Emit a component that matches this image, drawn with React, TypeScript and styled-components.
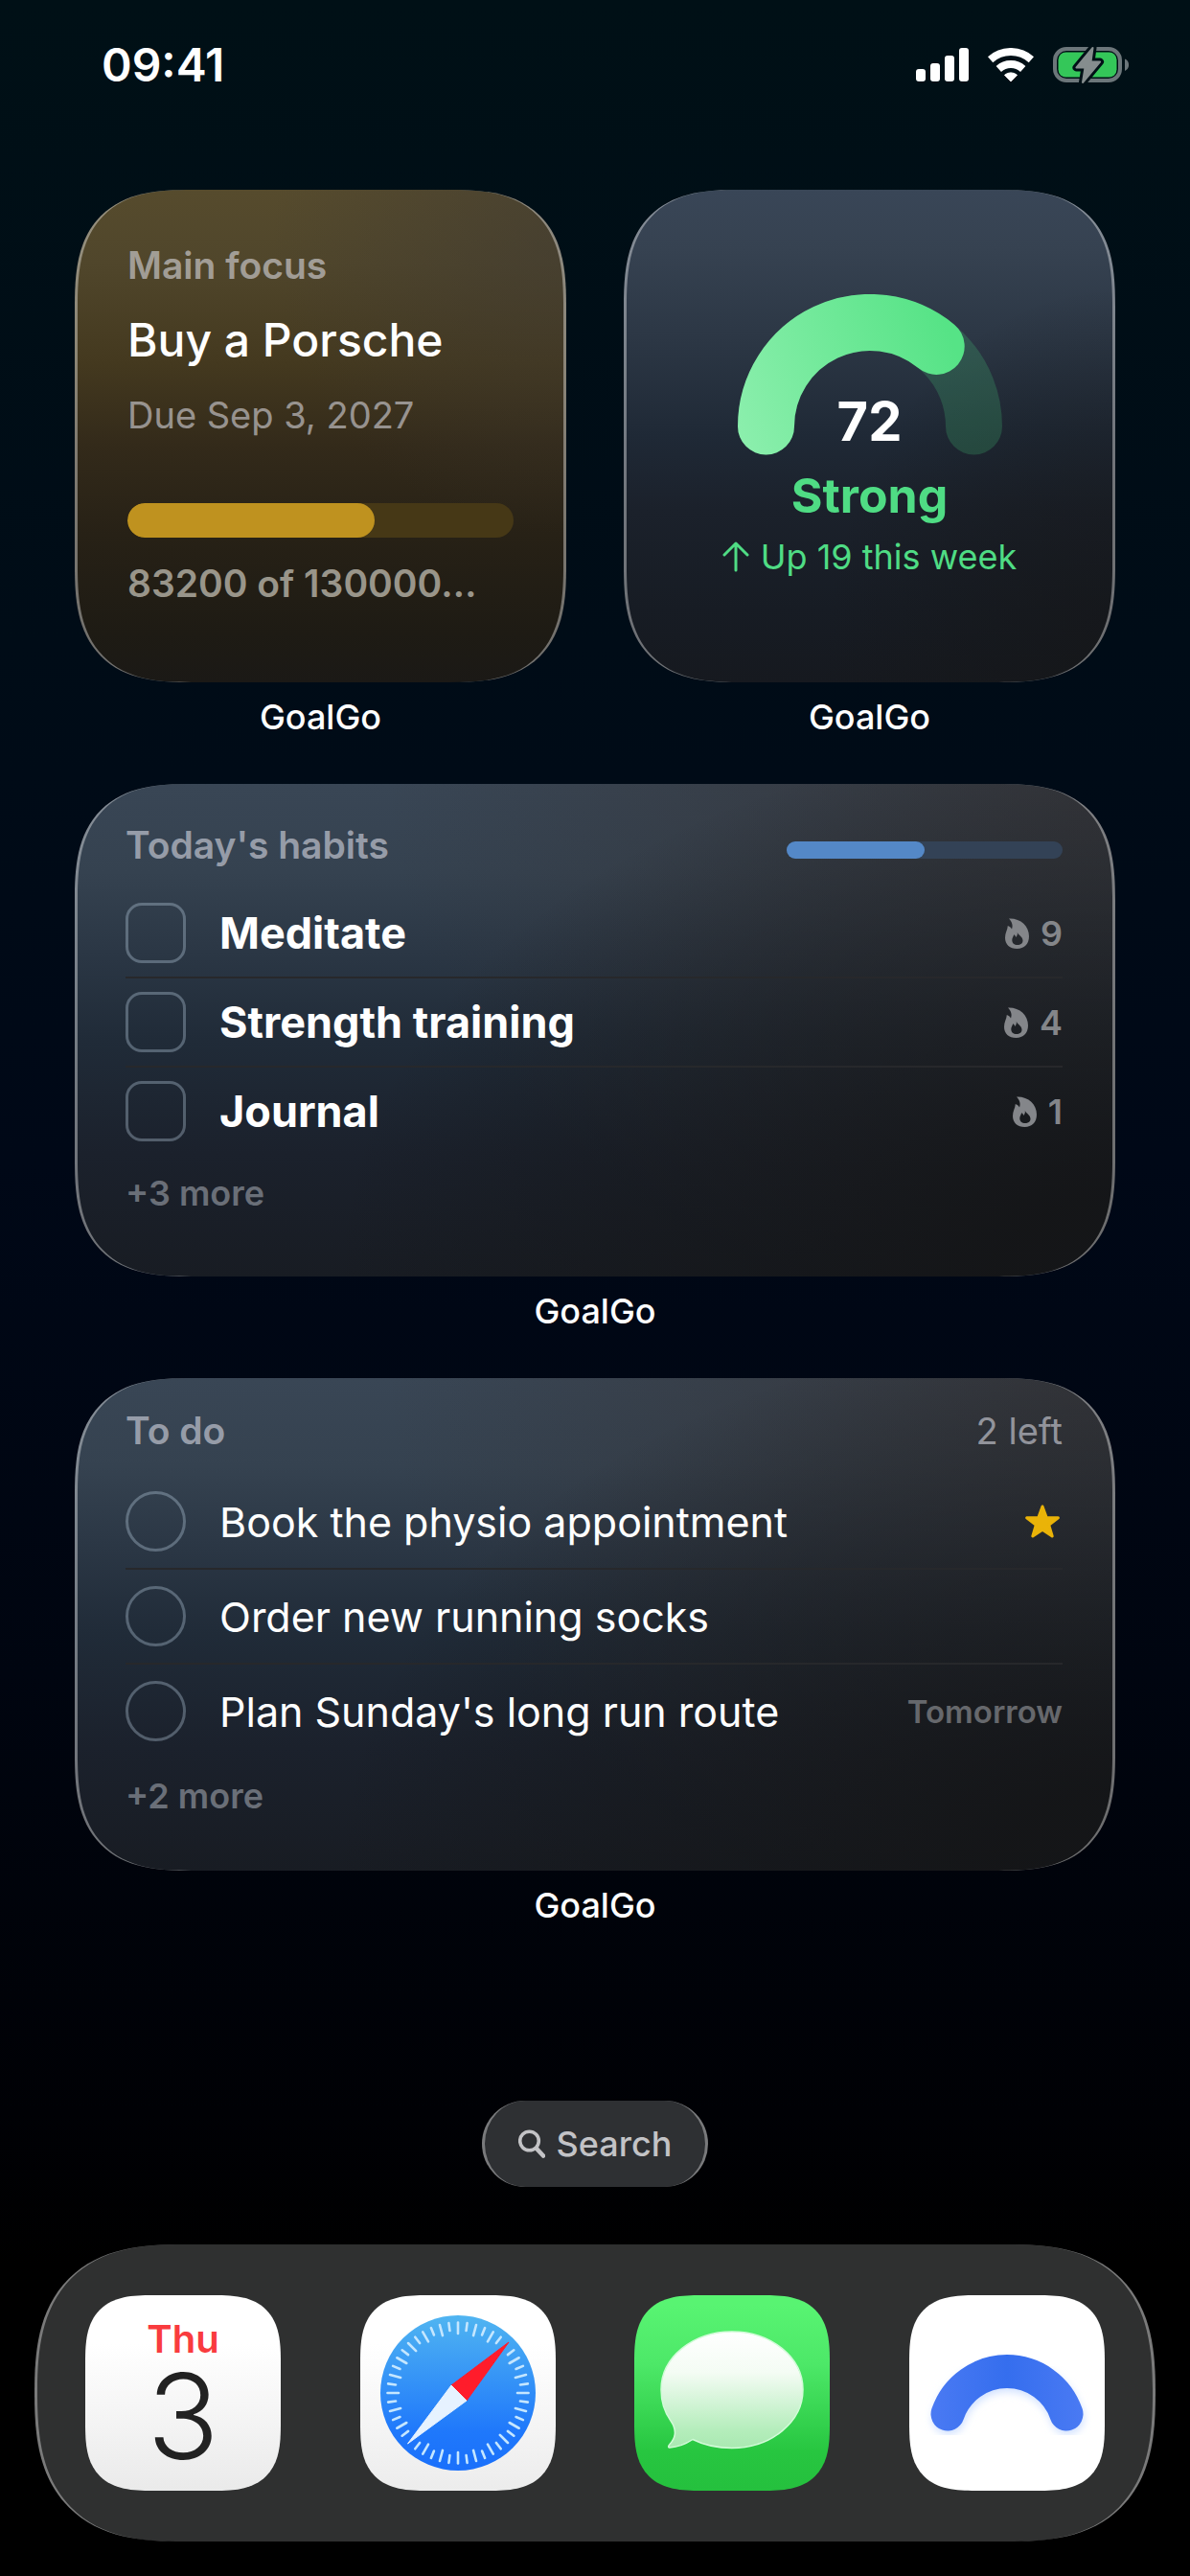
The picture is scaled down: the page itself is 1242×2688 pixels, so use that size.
import React, { useState } from 'react';
import styled, { createGlobalStyle } from 'styled-components';

const habits = [
  { name: 'Meditate', streak: 9 },
  { name: 'Strength training', streak: 4 },
  { name: 'Journal', streak: 1 },
];

const todos = [
  { name: 'Book the physio appointment', starred: true, due: '' },
  { name: 'Order new running socks', starred: false, due: '' },
  { name: "Plan Sunday's long run route", starred: false, due: 'Tomorrow' },
];

const goal = { title: 'Buy a Porsche', due: 'Due Sep 3, 2027', percent: 64 };

// 48 marks around the dial, the two under the needle tips are left out
const compassTicks = Array.from({ length: 48 }, (_, i) => i).filter(
  (i) => i !== 6 && i !== 30
);

const SignalIcon = () => (
  <svg width="55" height="36" viewBox="0 0 55 36" fill="#fff" aria-hidden="true">
    <rect x="0" y="22" width="10" height="13" rx="3" />
    <rect x="15" y="16" width="10" height="19" rx="3" />
    <rect x="30" y="8" width="10" height="27" rx="3" />
    <rect x="45" y="0" width="10" height="35" rx="3" />
  </svg>
);

const WifiIcon = () => (
  <svg width="48" height="36" viewBox="0 0 48 36" aria-hidden="true">
    <g fill="none" stroke="#fff" strokeWidth="8">
      <path d="M2.6 12.2A32 32 0 0 1 45.4 12.2" />
      <path d="M11.3 21.9A19 19 0 0 1 36.7 21.9" />
    </g>
    <path
      d="M24 35L17.5 28.3A10 10 0 0 1 30.5 28.3Z"
      fill="#fff"
      stroke="#fff"
      strokeLinejoin="round"
    />
  </svg>
);

const BatteryIcon = () => (
  <svg width="79" height="38" viewBox="0 0 79 38" aria-hidden="true">
    <rect x="2" y="2" width="68" height="33" rx="12" fill="none" stroke="#6c767a" strokeWidth="4" />
    <rect x="5.5" y="5.5" width="61" height="26" rx="8" fill="#34c759" />
    <path d="M75 12.5C80.5 14.5 80.5 23 75 25Z" fill="#6c767a" />
    <path
      d="M41.5 1L24.5 21.5H33.5L31 37L49 15.5H39.5Z"
      fill="#858d8e"
      stroke="#001016"
      strokeWidth="8"
      strokeLinejoin="round"
    />
    <path
      d="M41.5 1L24.5 21.5H33.5L31 37L49 15.5H39.5Z"
      fill="#858d8e"
      stroke="#858d8e"
      strokeWidth="2"
      strokeLinejoin="round"
    />
  </svg>
);

const FlameIcon = () => (
  <svg width="25" height="32" viewBox="0 0 25 32" aria-hidden="true">
    <path
      fill="currentColor"
      fillRule="evenodd"
      d="M4 .5C16 0 25 8 25 19C25 27 20 32 12.5 32C5 32 0 27.5 0 20.5C0 15.5 2.5 12.5 2.8 8C5 8.8 6.4 10 7 11.5C8.6 7.5 7 3.5 4 .5ZM12.8 14.8C13.8 18 18.5 19.5 18.5 23.5C18.5 26.5 16 28 13 28C9.5 28 7.3 26 7.3 23C7.3 20.5 8.8 19 9.2 17.2C10.5 17.8 11 19 11.3 20C12.7 18.5 13.2 17 12.8 14.8Z"
    />
  </svg>
);

const StarIcon = () => (
  <svg width="40" height="36" viewBox="0 0 40 36" role="img" aria-label="Starred">
    <path
      d="M19 2L23.2 13.4L35.4 13.8L25.7 21.2L29.2 33L19 26.2L8.8 33L12.3 21.2L2.6 13.8L14.8 13.4Z"
      fill="#eab308"
      stroke="#eab308"
      strokeWidth="3"
      strokeLinejoin="round"
    />
  </svg>
);

const ArrowUpIcon = () => (
  <svg width="28" height="32" viewBox="0 0 28 32" aria-hidden="true">
    <path
      d="M14 30V2M2 14L14 2L26 14"
      fill="none"
      stroke="currentColor"
      strokeWidth="3"
      strokeLinecap="round"
      strokeLinejoin="round"
    />
  </svg>
);

const SearchIcon = () => (
  <svg width="28" height="30" viewBox="0 0 28 30" fill="none" stroke="currentColor" aria-hidden="true">
    <circle cx="11.5" cy="12" r="9.8" strokeWidth="3.6" />
    <path d="M19 20L26 27.5" strokeWidth="4.6" strokeLinecap="round" />
  </svg>
);

const GaugeArc = () => (
  <svg width="276" height="168" viewBox="0 0 276 168" aria-hidden="true">
    <defs>
      <linearGradient id="gauge" gradientUnits="userSpaceOnUse" x1="0" y1="168" x2="236" y2="80">
        <stop offset="0" stopColor="#8defae" />
        <stop offset="1" stopColor="#56e386" />
      </linearGradient>
    </defs>
    <g fill="none" strokeWidth="59" strokeLinecap="round">
      <path d="M29.5 138A108.5 108.5 0 0 1 246.5 138" stroke="#4ade80" strokeOpacity="0.2" />
      <path d="M29.5 138A108.5 108.5 0 0 1 207.2 54.4" stroke="url(#gauge)" />
    </g>
  </svg>
);

const CompassIcon = () => (
  <svg width="204" height="204" viewBox="0 0 204 204" aria-hidden="true">
    <defs>
      <linearGradient id="dial" x1="0" y1="0" x2="0" y2="1">
        <stop offset="0" stopColor="#50b5f1" />
        <stop offset="0.75" stopColor="#1f78fb" />
        <stop offset="1" stopColor="#1a70fb" />
      </linearGradient>
    </defs>
    <circle cx="102" cy="102" r="81" fill="url(#dial)" />
    <g stroke="#c4e6ff" strokeWidth="2.6" strokeLinecap="round">
      {compassTicks.map((i) => (
        <path
          key={i}
          d={i % 2 === 0 ? 'M102 28.5V40' : 'M102 28.5V36.5'}
          transform={`rotate(${i * 7.5} 102 102)`}
        />
      ))}
    </g>
    <path d="M155 49L95 94L111 110Z" fill="#ff1c2b" stroke="#ff1c2b" strokeLinejoin="round" />
    <path d="M49.5 155L95 94L111 110Z" fill="#e6f2ff" stroke="#e6f2ff" strokeLinejoin="round" />
  </svg>
);

const BubbleIcon = () => (
  <svg width="204" height="204" viewBox="0 0 204 204" aria-hidden="true">
    <defs>
      <linearGradient id="bubble" x1="0" y1="0" x2="0" y2="1">
        <stop offset="0" stopColor="#ffffff" />
        <stop offset="0.35" stopColor="#f4fcf4" />
        <stop offset="0.85" stopColor="#b4edbb" />
        <stop offset="1" stopColor="#a9e9b1" />
      </linearGradient>
    </defs>
    <path
      d="M102 38C143 38 176 65 176 98.5C176 132 143 159.5 102 159.5C87 159.5 73 156.5 61 150.5C55 154.5 46 158.5 37 159C35 159 35.5 157 37 155.5C43 149 45 141 38 131C31.5 122 28 110 28 98.5C28 65 61 38 102 38Z"
      fill="url(#bubble)"
      stroke="#d2fbd8"
      strokeWidth="1.5"
      strokeLinejoin="round"
    />
  </svg>
);

const ArcIcon = () => (
  <svg width="204" height="204" viewBox="0 0 204 204" fill="none" strokeLinecap="round" aria-hidden="true">
    <defs>
      <filter id="glow" x="-20%" y="-20%" width="140%" height="160%">
        <feGaussianBlur stdDeviation="4" />
      </filter>
      <linearGradient id="arc" gradientUnits="userSpaceOnUse" x1="22" y1="0" x2="182" y2="0">
        <stop offset="0" stopColor="#4a7af3" />
        <stop offset="0.5" stopColor="#356eee" />
        <stop offset="1" stopColor="#4a7af3" />
      </linearGradient>
    </defs>
    <path d="M41 128A65.5 65.5 0 0 1 165 128" stroke="#cfe0ff" strokeWidth="34" filter="url(#glow)" />
    <path d="M40 124A65.5 65.5 0 0 1 164 124" stroke="url(#arc)" strokeWidth="35" />
  </svg>
);

const App = () => {
  const [doneHabits, setDoneHabits] = useState<string[]>([]);
  const [doneTodos, setDoneTodos] = useState<string[]>([]);

  const toggle = (list: string[], name: string) =>
    list.includes(name) ? list.filter((n) => n !== name) : [...list, name];

  return (
    <Screen>
      <GlobalStyle />
      <StatusBar>
        <Time>09:41</Time>
        <StatusIcons>
          <SignalIcon />
          <WifiIcon />
          <BatteryIcon />
        </StatusIcons>
      </StatusBar>

      <Widgets>
        <Widget>
          <Card $tone="gold" $padding="55px 52px 0">
            <Heading>Main focus</Heading>
            <GoalTitle>{goal.title}</GoalTitle>
            <Detail>{goal.due}</Detail>
            <GoalTrack
              role="progressbar"
              aria-label={goal.title}
              aria-valuenow={goal.percent}
              aria-valuemin={0}
              aria-valuemax={100}
            >
              <GoalFill style={{ width: `${goal.percent}%` }} />
            </GoalTrack>
            <Amount>83200 of 130000…</Amount>
          </Card>
          <AppName>GoalGo</AppName>
        </Widget>

        <Widget>
          <Card $tone="slate" $padding="0">
            <Momentum>
              <Gauge>
                <GaugeArc />
                <Score>72</Score>
              </Gauge>
              <Rating>Strong</Rating>
              <Trend>
                <ArrowUpIcon />
                Up 19 this week
              </Trend>
            </Momentum>
          </Card>
          <AppName>GoalGo</AppName>
        </Widget>

        <Widget $wide>
          <Card $tone="wide" $padding="40px 52px 0 50px">
            <CardHeader>
              <Heading>Today's habits</Heading>
              <HabitTrack
                role="progressbar"
                aria-label="Habits done"
                aria-valuenow={50}
                aria-valuemin={0}
                aria-valuemax={100}
              >
                <HabitFill style={{ width: '50%' }} />
              </HabitTrack>
            </CardHeader>
            <List>
              {habits.map((habit) => (
                <Row key={habit.name} $height={93}>
                  <HabitLabel>
                    <Check
                      type="checkbox"
                      $radius={17}
                      checked={doneHabits.includes(habit.name)}
                      onChange={() => setDoneHabits(toggle(doneHabits, habit.name))}
                    />
                    {habit.name}
                  </HabitLabel>
                  <Streak>
                    <FlameIcon />
                    {habit.streak}
                  </Streak>
                </Row>
              ))}
            </List>
            <More>+3 more</More>
          </Card>
          <AppName>GoalGo</AppName>
        </Widget>

        <Widget $wide>
          <Card $tone="wide" $padding="31px 52px 0 50px">
            <CardHeader>
              <Heading>To do</Heading>
              <Detail>2 left</Detail>
            </CardHeader>
            <List>
              {todos.map((todo) => (
                <Row key={todo.name} $height={99}>
                  <RowLabel>
                    <Check
                      type="checkbox"
                      $radius={32}
                      checked={doneTodos.includes(todo.name)}
                      onChange={() => setDoneTodos(toggle(doneTodos, todo.name))}
                    />
                    {todo.name}
                  </RowLabel>
                  {todo.starred && <StarIcon />}
                  {todo.due && <Due>{todo.due}</Due>}
                </Row>
              ))}
            </List>
            <More>+2 more</More>
          </Card>
          <AppName>GoalGo</AppName>
        </Widget>
      </Widgets>

      <SearchButton type="button">
        <SearchIcon />
        Search
      </SearchButton>

      <Dock aria-label="Dock">
        <AppIcon href="#calendar" $fill="linear-gradient(#ffffff 25%, #eaeaea)">
          <Weekday>Thu</Weekday>
          <Day>3</Day>
        </AppIcon>
        <AppIcon
          href="#browser"
          aria-label="Browser"
          $fill="linear-gradient(#ffffff 25%, #ececec)"
        >
          <CompassIcon />
        </AppIcon>
        <AppIcon
          href="#messages"
          aria-label="Messages"
          $fill="linear-gradient(#58f472 5%, #4de868 35%, #27c640 80%, #25c03e)"
        >
          <BubbleIcon />
        </AppIcon>
        <AppIcon href="#goalgo" aria-label="GoalGo" $fill="#ffffff">
          <ArcIcon />
        </AppIcon>
      </Dock>
    </Screen>
  );
};

const GlobalStyle = createGlobalStyle`
  *, *::before, *::after {
    box-sizing: border-box;
  }

  body {
    margin: 0;
    background: #000;
    color: #fff;
    font-family: Inter, 'Liberation Sans', sans-serif;
  }

  svg {
    display: block;
    flex: none;
  }
`;

const tones = {
  gold: `
    radial-gradient(60% 60% at 100% 10%, rgba(60, 56, 52, 0.5), transparent),
    linear-gradient(#564b2d, #50462b 15%, #44391f 35%, #332a1a 52%, #272116 70%, #1e1b14 90%, #1b1916)
  `,
  slate: `
    radial-gradient(60% 80% at 100% 100%, rgba(21, 22, 24, 0.8), transparent),
    linear-gradient(#394657, #364251 12%, #2c3745 30%, #1f2936 50%, #1b212b 65%, #171c24 85%, #16191f)
  `,
  wide: `
    radial-gradient(75% 110% at 100% 100%, rgba(20, 21, 23, 0.95) 15%, rgba(20, 21, 23, 0.4) 65%, transparent),
    radial-gradient(70% 110% at 100% 0, rgba(52, 51, 54, 0.85), transparent),
    linear-gradient(#394655, #354250 18%, #2b3745 34%, #202b38 52%, #1b212c 75%, #181c23)
  `,
};

const Screen = styled.div`
  display: flex;
  flex-direction: column;
  min-height: 100vh;
  padding-bottom: 36px;
  background: linear-gradient(#001016, #000c17 25%, #000817 45%, #000510 65%, #000105 82%, #000 88%);
`;

const StatusBar = styled.header`
  display: flex;
  align-items: center;
  justify-content: space-between;
  padding: 44px 64px 44px 106px;
`;

const Time = styled.time`
  font-size: 48px;
  line-height: 48px;
  font-weight: 600;
`;

const StatusIcons = styled.div`
  display: flex;
  align-items: center;
  gap: 20px;
`;

const Widgets = styled.main`
  display: grid;
  grid-template-columns: 1fr 1fr;
  gap: 48px 60px;
  padding: 62px 78px 0;
`;

const Widget = styled.section<{ $wide?: boolean }>`
  display: flex;
  flex-direction: column;
  gap: 14px;
  min-width: 0;
  grid-column: ${(p) => (p.$wide ? '1 / -1' : 'auto')};
`;

const Card = styled.div<{ $tone: keyof typeof tones; $padding: string }>`
  display: flex;
  flex-direction: column;
  min-height: 514px;
  padding: ${(p) => p.$padding};
  border: solid rgba(255, 255, 255, 0.38);
  border-width: 0 3px;
  border-radius: 95px;
  background: ${(p) => tones[p.$tone]};
  background-origin: border-box;

  @supports (corner-shape: squircle) {
    border-radius: 122px;
    corner-shape: superellipse(1.45);
  }
`;

const AppName = styled.div`
  font-size: 36px;
  line-height: 44px;
  font-weight: 500;
  text-align: center;
`;

const Heading = styled.h2`
  margin: 0;
  font-size: 39px;
  line-height: 48px;
  font-weight: 600;
  color: rgba(235, 235, 245, 0.55);
`;

const Detail = styled.div`
  font-size: 38px;
  line-height: 48px;
  color: rgba(235, 235, 245, 0.55);
`;

const GoalTitle = styled.div`
  margin: 24px 0;
  font-size: 48px;
  line-height: 60px;
  font-weight: 500;
`;

const GoalTrack = styled.div`
  height: 36px;
  margin: 68px 0 24px;
  border-radius: 18px;
  background: #463816;
  overflow: hidden;
`;

const GoalFill = styled.div`
  height: 100%;
  border-radius: 18px;
  background: #bf921f;
`;

const Amount = styled.div`
  font-size: 39px;
  line-height: 48px;
  font-weight: 600;
  color: #99958a;
  white-space: nowrap;
`;

const Momentum = styled.div`
  display: flex;
  flex: 1;
  flex-direction: column;
  align-items: center;
  justify-content: center;
  gap: 12px;
  color: #4fdc84;
`;

const Gauge = styled.div`
  display: grid;
  justify-items: center;
  align-items: end;

  > * {
    grid-area: 1 / 1;
  }
`;

const Score = styled.div`
  font-size: 56px;
  line-height: 70px;
  font-weight: 700;
  color: #fff;
`;

const Rating = styled.div`
  font-size: 50px;
  line-height: 60px;
  font-weight: 700;
`;

const Trend = styled.div`
  display: flex;
  align-items: center;
  gap: 12px;
  font-size: 36px;
  line-height: 44px;
`;

const CardHeader = styled.div`
  display: flex;
  align-items: baseline;
  justify-content: space-between;
  margin-bottom: 22px;
`;

const HabitTrack = styled.div`
  width: 288px;
  height: 18px;
  border-radius: 9px;
  background: #334256;
`;

const HabitFill = styled.div`
  height: 100%;
  border-radius: 9px;
  background: #5488c7;
`;

const List = styled.ul`
  margin: 0;
  padding: 0;
  list-style: none;
`;

const Row = styled.li<{ $height: number }>`
  display: flex;
  align-items: center;
  justify-content: space-between;
  min-height: ${(p) => p.$height}px;
  border-bottom: 2px solid #27282b;

  &:last-child {
    border-bottom-color: transparent;
  }
`;

const RowLabel = styled.label`
  display: flex;
  align-items: center;
  gap: 35px;
  font-size: 43px;
  line-height: 56px;
`;

const HabitLabel = styled(RowLabel)`
  font-size: 45px;
  font-weight: 700;
`;

const Check = styled.input<{ $radius: number }>`
  appearance: none;
  flex: none;
  width: 63px;
  height: 63px;
  margin: 0;
  border: 3px solid rgba(200, 220, 240, 0.32);
  border-radius: ${(p) => p.$radius}px;
  cursor: pointer;

  &:checked {
    background: #5488c7;
  }
`;

const Streak = styled.div`
  display: flex;
  align-items: center;
  gap: 12px;
  font-size: 36px;
  line-height: 44px;
  font-weight: 600;
  color: #84868a;
`;

const Due = styled.div`
  font-size: 33px;
  line-height: 44px;
  font-weight: 600;
  color: #66686c;
`;

const More = styled.div`
  margin-top: 16px;
  font-size: 36px;
  line-height: 44px;
  font-weight: 600;
  color: #6a6f78;
`;

const SearchButton = styled.button`
  display: flex;
  align-items: center;
  align-self: center;
  gap: 12px;
  margin: auto 0 60px;
  padding: 23px 35px;
  border: solid rgba(255, 255, 255, 0.36);
  border-width: 0 3px;
  border-radius: 45px;
  background: #2e3033;
  color: #c3c3c6;
  font: 500 36px/44px Inter, 'Liberation Sans', sans-serif;
  cursor: pointer;
`;

const Dock = styled.nav`
  display: flex;
  justify-content: space-between;
  margin: 0 36px;
  padding: 53px 50px;
  border: solid rgba(255, 255, 255, 0.36);
  border-width: 0 3px;
  border-radius: 120px;
  background: #2f3030;

  @supports (corner-shape: squircle) {
    border-radius: 155px;
    corner-shape: superellipse(1.4);
  }
`;

const AppIcon = styled.a<{ $fill: string }>`
  display: flex;
  flex-direction: column;
  align-items: center;
  justify-content: center;
  width: 204px;
  height: 204px;
  border-radius: 46px;
  background: ${(p) => p.$fill};
  color: #222;
  text-decoration: none;
  overflow: hidden;

  @supports (corner-shape: squircle) {
    border-radius: 70px;
    corner-shape: superellipse(1.5);
  }
`;

const Weekday = styled.span`
  font-size: 40px;
  line-height: 48px;
  font-weight: 600;
  color: #f93b3e;
`;

const Day = styled.span`
  font-size: 124px;
  line-height: 112px;
  font-weight: 300;
`;

export default App;
